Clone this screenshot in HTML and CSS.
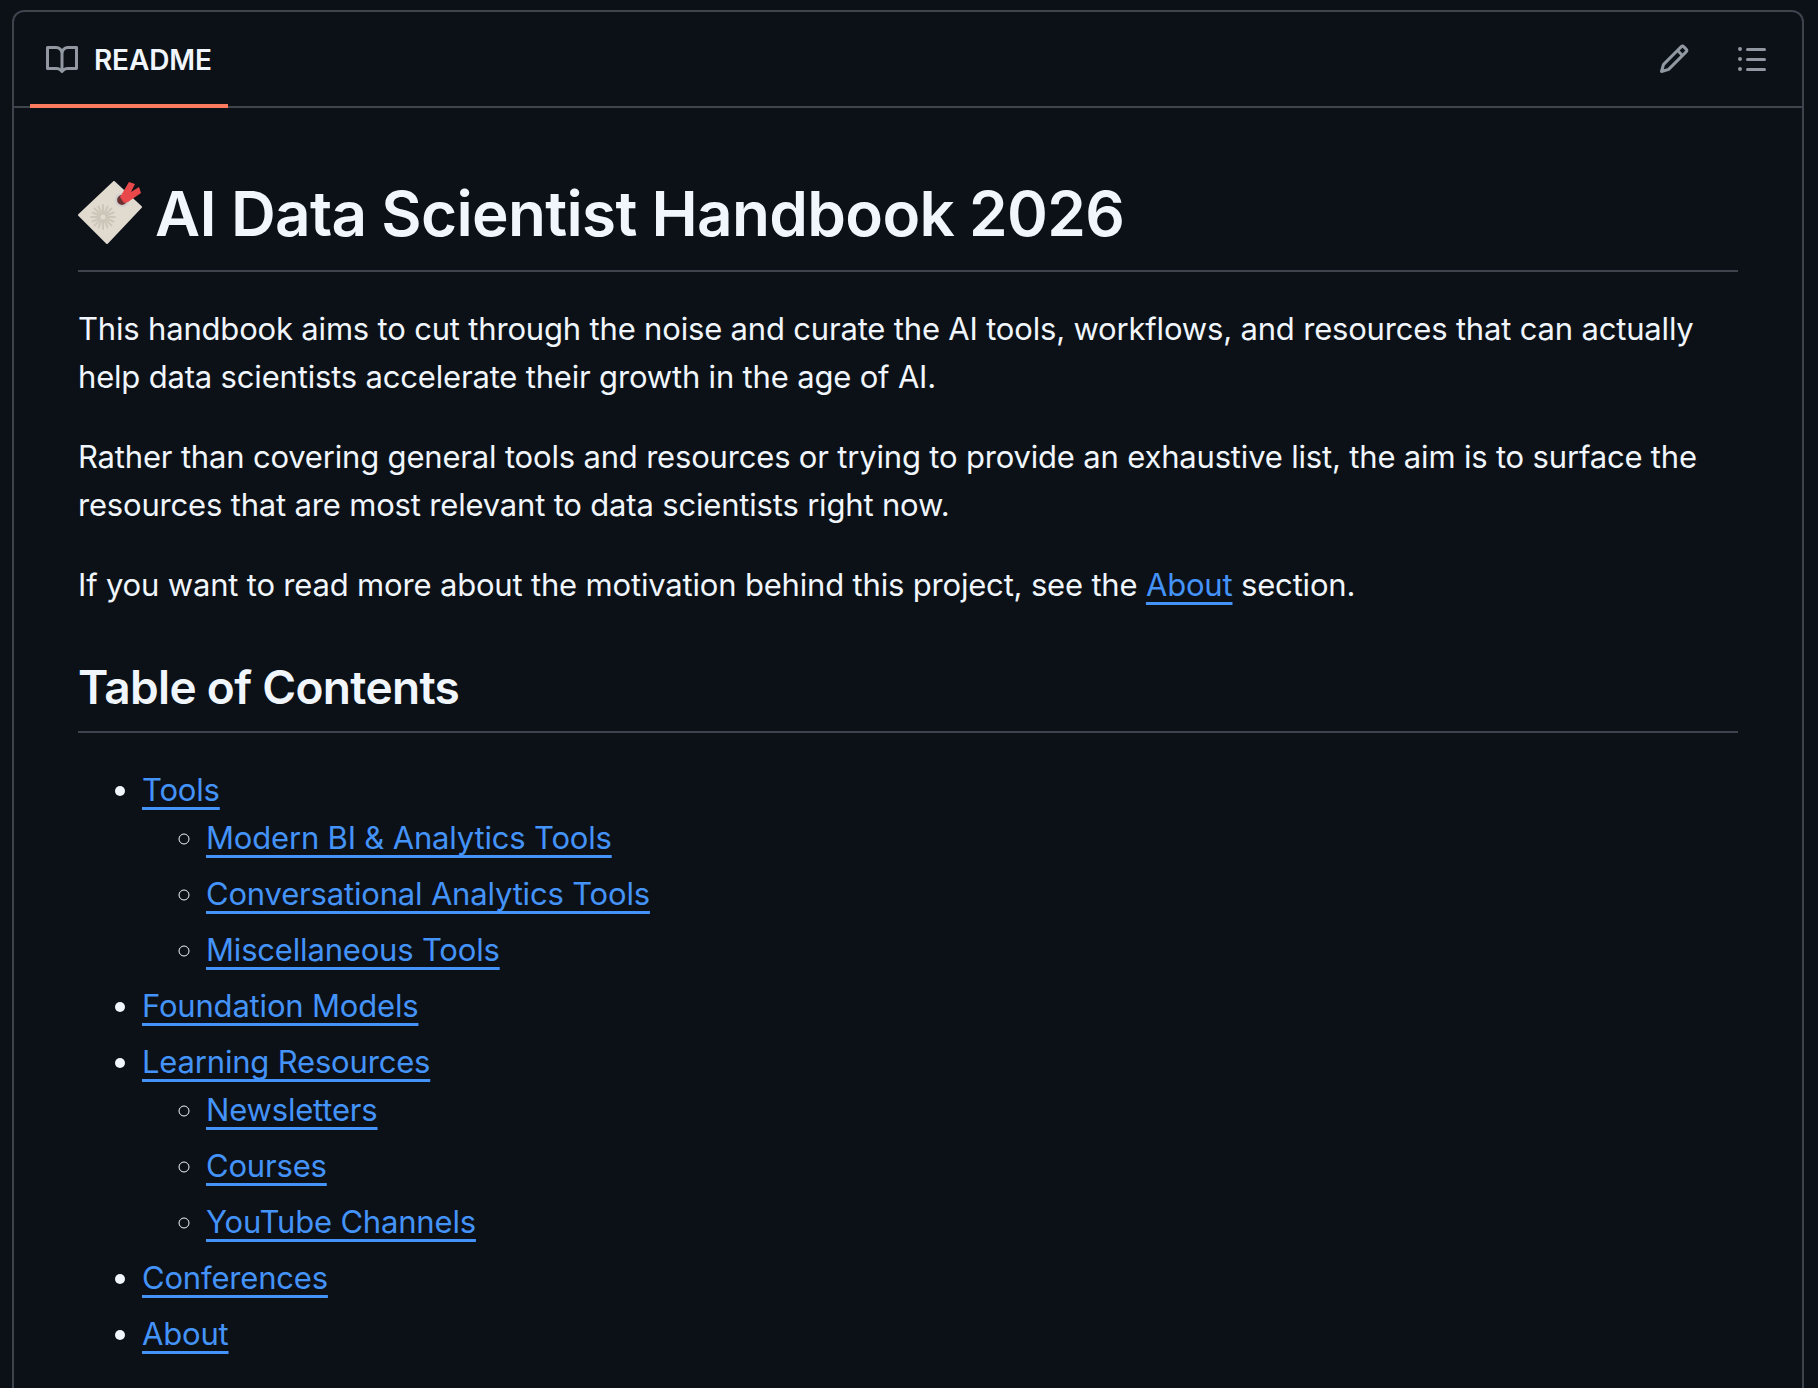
FILE: index.html
```html
<!DOCTYPE html>
<html lang="en">

<head>
    <meta charset="UTF-8">
    <meta name="viewport" content="width=device-width, initial-scale=1.0">
    <title>README</title>
    <link rel="stylesheet" href="styles.css">
</head>

<body>
    <div class="readme">
        <div class="readme-head">
            <div class="tab">
                <svg class="icon" viewBox="0 0 16 16">
                    <path d="M0 1.75A.75.75 0 0 1 .75 1h4.253c1.227 0 2.317.59 3 1.501A3.743 3.743 0 0 1 11.006 1h4.245a.75.75 0 0 1 .75.75v10.5a.75.75 0 0 1-.75.75h-4.507a2.25 2.25 0 0 0-1.591.659l-.622.621a.75.75 0 0 1-1.06 0l-.622-.621A2.25 2.25 0 0 0 5.258 13H.75a.75.75 0 0 1-.75-.75Zm7.251 10.324.004-5.073-.002-2.253A2.25 2.25 0 0 0 5.003 2.5H1.5v9h3.757a3.75 3.75 0 0 1 1.994.574ZM8.755 4.75l-.004 7.322a3.752 3.752 0 0 1 1.992-.572H14.5v-9h-3.495a2.25 2.25 0 0 0-2.25 2.25Z"></path>
                </svg>
                <span>README</span>
            </div>
            <div class="tools">
                <svg class="icon" viewBox="0 0 16 16">
                    <path d="M11.013 1.427a1.75 1.75 0 0 1 2.474 0l1.086 1.086a1.75 1.75 0 0 1 0 2.474l-8.61 8.61c-.21.21-.47.364-.756.445l-3.251.93a.75.75 0 0 1-.927-.928l.929-3.25c.081-.286.235-.547.445-.758l8.61-8.61Zm.176 4.823L9.75 4.81l-6.286 6.287a.253.253 0 0 0-.064.108l-.558 1.953 1.953-.558a.253.253 0 0 0 .108-.064Zm1.238-3.763a.25.25 0 0 0-.354 0L10.811 3.75l1.439 1.44 1.263-1.263a.25.25 0 0 0 0-.354Z"></path>
                </svg>
                <svg class="icon" viewBox="0 0 16 16">
                    <path d="M5.75 2.5h8.5a.75.75 0 0 1 0 1.5h-8.5a.75.75 0 0 1 0-1.5Zm0 5h8.5a.75.75 0 0 1 0 1.5h-8.5a.75.75 0 0 1 0-1.5Zm0 5h8.5a.75.75 0 0 1 0 1.5h-8.5a.75.75 0 0 1 0-1.5ZM2 14a1 1 0 1 1 0-2 1 1 0 0 1 0 2Zm1-6a1 1 0 1 1-2 0 1 1 0 0 1 2 0ZM2 4a1 1 0 1 1 0-2 1 1 0 0 1 0 2Z"></path>
                </svg>
            </div>
        </div>

        <div class="markdown">
            <h1>
                <svg class="tag" viewBox="0 0 64 64">
                    <path d="M36 1 63 26 29 62 1 34Z" fill="#e0dacf" stroke="#e0dacf" stroke-width="2" stroke-linejoin="round"></path>
                    <g stroke="#cdc6b8" stroke-width="2" stroke-linecap="round">
                        <path d="M25 24 V48"></path>
                        <path d="M13 36 H37"></path>
                        <path d="M16.500 27.500 33.500 44.500"></path>
                        <path d="M33.500 27.500 16.500 44.500"></path>
                        <path d="M20.500 25.500 29.500 46.500"></path>
                        <path d="M29.500 25.500 20.500 46.500"></path>
                        <path d="M14.500 31.500 35.500 40.500"></path>
                        <path d="M35.500 31.500 14.500 40.500"></path>
                    </g>
                    <circle cx="25" cy="36" r="2.500" fill="#e0dacf"></circle>
                    <circle cx="44" cy="19" r="6" fill="#6b3030" stroke="#cfcfcf" stroke-width="2.2"></circle>
                    <path d="M51 1 57 3 53 11 61 6 63 12 50 21 46 22 42 16Z" fill="#e8484a"></path>
                </svg>
                AI Data Scientist Handbook 2026
            </h1>
            <p>This handbook aims to cut through the noise and curate the AI tools, workflows, and resources that can actually help data scientists accelerate their growth in the age of AI.</p>
            <p>Rather than covering general tools and resources or trying to provide an exhaustive list, the aim is to surface the resources that are most relevant to data scientists right now.</p>
            <p>If you want to read more about the motivation behind this project, see the <a href="#about">About</a> section.</p>
            <h2>Table of Contents</h2>
            <ul>
                <li><a href="#tools">Tools</a>
                    <ul>
                        <li><a href="#bi">Modern BI &amp; Analytics Tools</a></li>
                        <li><a href="#conv">Conversational Analytics Tools</a></li>
                        <li><a href="#misc">Miscellaneous Tools</a></li>
                    </ul>
                </li>
                <li><a href="#models">Foundation Models</a></li>
                <li><a href="#learning">Learning Resources</a>
                    <ul>
                        <li><a href="#news">Newsletters</a></li>
                        <li><a href="#courses">Courses</a></li>
                        <li><a href="#youtube">YouTube Channels</a></li>
                    </ul>
                </li>
                <li><a href="#conferences">Conferences</a></li>
                <li><a href="#about">About</a></li>
            </ul>
        </div>
    </div>
</body>

</html>
```

FILE: styles.css
```css
* {
    box-sizing: border-box;
}

html,
body {
    height: 100%;
    margin: 0;
    overflow: hidden;
    background-color: #0c1118;
}

body {
    padding: 10px 14px 0 12px;
    color: #f0f6fc;
    font-family: Inter, "Liberation Sans", sans-serif;
}

.readme {
    min-height: 1500px;
    border: 2px solid #3d444d;
    border-radius: 12px;
}

.readme-head {
    display: flex;
    justify-content: space-between;
    align-items: center;
    height: 96px;
    padding: 0 34px 0 16px;
    border-bottom: 2px solid #3d444d;
}

.tab {
    display: flex;
    align-items: center;
    align-self: flex-start;
    gap: 16px;
    height: 96px;
    padding: 3px 16px 0;
    border-bottom: 4px solid #fa7b5f;
    font-size: 28px;
    font-weight: 600;
    letter-spacing: -0.15px;
}

.icon {
    width: 32px;
    height: 32px;
    fill: #9198a1;
}

.tools {
    display: flex;
    gap: 46px;
}

.markdown {
    padding: 68px 64px 0;
    font-size: 31px;
    line-height: 48px;
    letter-spacing: -0.18px;
}

.markdown h1 {
    display: flex;
    align-items: center;
    gap: 13px;
    margin: 0 0 33px;
    padding-bottom: 19px;
    border-bottom: 2px solid #3d444d;
    font-size: 62px;
    line-height: 75px;
    font-weight: 600;
    letter-spacing: -0.67px;
}

.tag {
    width: 64px;
    height: 64px;
    flex: none;
    margin-top: -2px;
}

.markdown p {
    margin: 0 0 32px;
}

.markdown h2 {
    margin: 48px 0 33px;
    padding-bottom: 14px;
    border-bottom: 2px solid #3d444d;
    font-size: 46px;
    line-height: 60px;
    font-weight: 600;
    letter-spacing: -0.68px;
}

.markdown a {
    color: #4493f8;
    text-decoration: underline;
    text-decoration-thickness: 3px;
    text-underline-offset: 6px;
    text-decoration-skip-ink: none;
}

.markdown ul {
    margin: 0;
    padding-left: 64px;
}

.markdown li+li {
    margin-top: 8px;
}
```
